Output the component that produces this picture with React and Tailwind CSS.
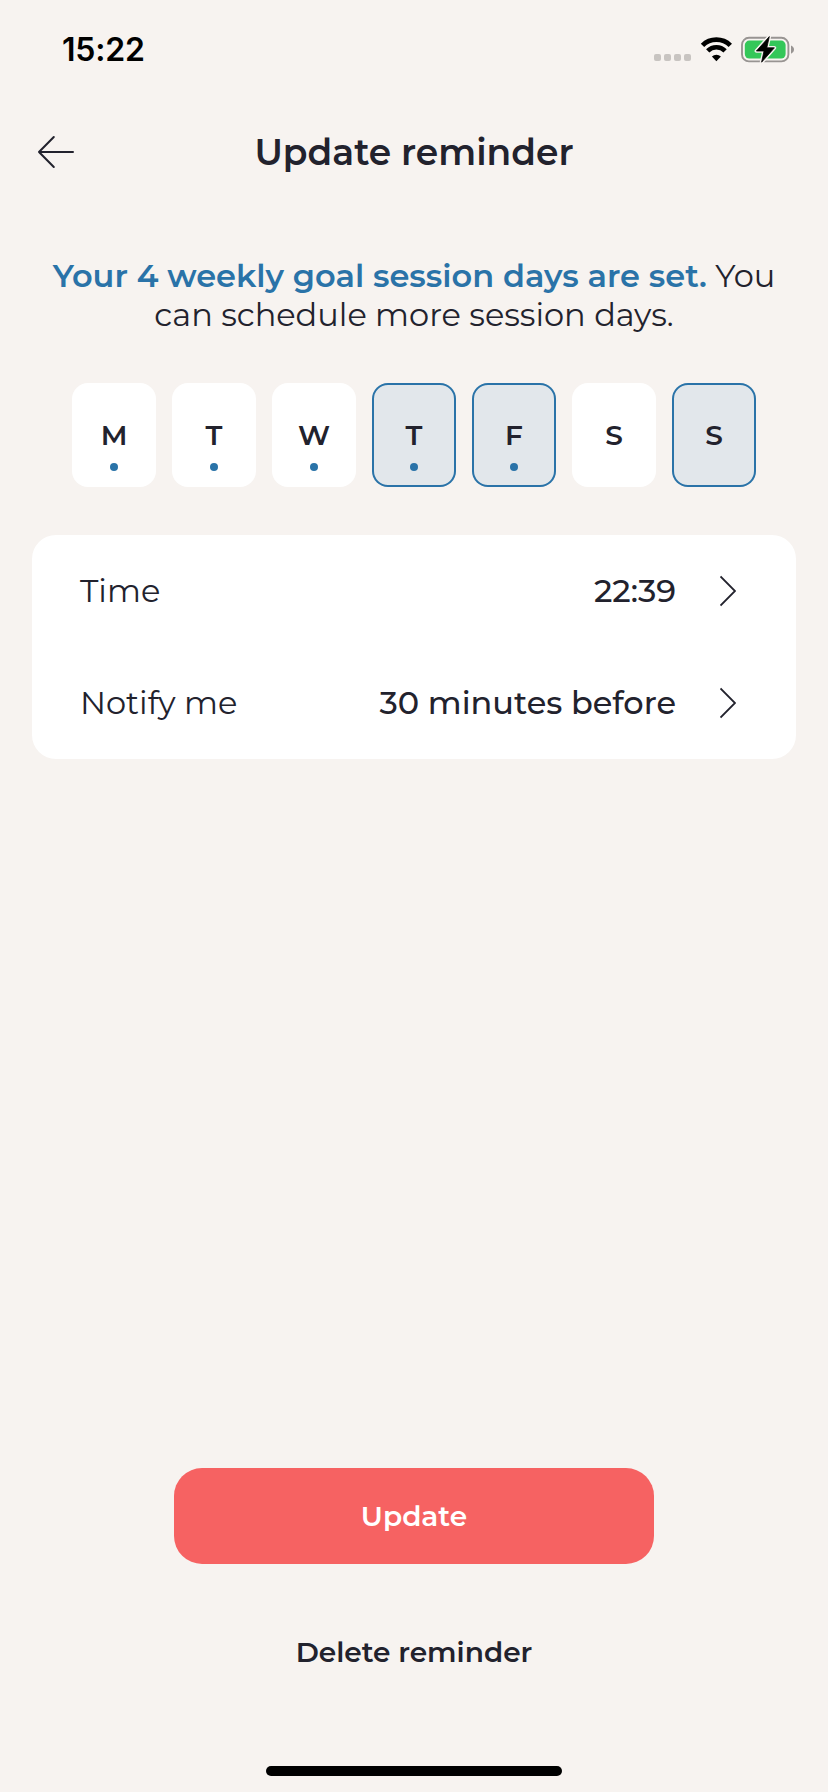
const days = [
  { label: 'M', dot: true, selected: false },
  { label: 'T', dot: true, selected: false },
  { label: 'W', dot: true, selected: false },
  { label: 'T', dot: true, selected: true },
  { label: 'F', dot: true, selected: true },
  { label: 'S', dot: false, selected: false },
  { label: 'S', dot: false, selected: true },
];

const settings = [
  { label: 'Time', value: '22:39' },
  { label: 'Notify me', value: '30 minutes before' },
];

function StatusBar() {
  return (
    <div className="flex h-[98px] items-center justify-between pl-[62px] pr-[33px]">
      <span className="mt-0.5 font-[Inter,sans-serif] text-[32px] font-semibold leading-none tracking-[-0.2px] text-black">15:22</span>
      <div className="flex items-center">
        <div className="mt-[17px] flex gap-[3px]">
          {[0, 1, 2, 3].map((i) => (
            <span key={i} className="h-[7px] w-[7px] rounded-[2px] bg-[#c8c4c1]" />
          ))}
        </div>
        <svg className="ml-[9px]" width="33" height="26" viewBox="0 0 33 26" fill="none">
          <path d="M2.5 9.4A19.8 19.8 0 0 1 30.3 9.4" stroke="#000" strokeWidth="4.8" />
          <path d="M7.7 14.9A12.3 12.3 0 0 1 25.1 14.9" stroke="#000" strokeWidth="4.6" />
          <path d="M16.4 25.2L11.9 20.6A6.4 6.4 0 0 1 20.9 20.6Z" fill="#000" />
        </svg>
        <svg className="ml-2" width="54" height="30" viewBox="0 0 54 30" fill="none">
          <rect x="1" y="3.8" width="46.4" height="23.6" rx="7" stroke="#989492" strokeWidth="1.9" />
          <rect x="3.8" y="6.6" width="40.8" height="18" rx="4.5" fill="#34c759" />
          <path d="M50 11.5C52 12.4 53 13.8 53 15.6C53 17.4 52 18.8 50 19.7Z" fill="#989492" />
          <path d="M28.3 2.6L15.4 17H23L20.6 28.2L33.4 13.8H25.8Z" fill="#000" stroke="#f7f3f0" strokeWidth="3.6" strokeLinejoin="round" />
          <path d="M28.3 2.6L15.4 17H23L20.6 28.2L33.4 13.8H25.8Z" fill="#000" stroke="#000" strokeWidth="0.8" strokeLinejoin="round" />
        </svg>
      </div>
    </div>
  );
}

function Chevron() {
  return (
    <svg width="16" height="32" viewBox="0 0 16 32" fill="none" stroke="#22222d" strokeWidth="1.8">
      <path d="M0.5 1.5L15 16L0.5 30.5" />
    </svg>
  );
}

export default function App() {
  return (
    <div className="flex h-[1792px] w-[828px] flex-col bg-[#f7f3f0] font-[Montserrat,Inter,sans-serif] text-[#22222d]">
      <StatusBar />

      <header className="grid h-[108px] grid-cols-[90px_1fr_90px] items-center">
        <button className="ml-[37px] w-[38px]" aria-label="Back">
          <svg width="38" height="34" viewBox="0 0 38 34" fill="none" stroke="#22222d" strokeWidth="2" strokeLinecap="round" strokeLinejoin="round">
            <path d="M36 17H2M16.8 2L2 17L16.8 32" />
          </svg>
        </button>
        <h1 className="text-center text-[36px] font-semibold leading-none">Update reminder</h1>
      </header>

      <p className="mt-[50px] whitespace-nowrap text-center text-[32px] leading-[39px]">
        <span className="font-semibold text-[#2a73a8]">Your 4 weekly goal session days are set.</span> You
        <br />
        can schedule more session days.
      </p>

      <div className="mt-[49px] flex justify-center gap-4">
        {days.map((day, i) => (
          <button
            key={i}
            className={
              day.selected
                ? 'relative flex h-[104px] w-[84px] items-center justify-center rounded-2xl bg-[#e2e7eb] ring-2 ring-inset ring-[#2a73a8]'
                : 'relative flex h-[104px] w-[84px] items-center justify-center rounded-2xl bg-white'
            }
          >
            <span className="text-[28px] font-semibold leading-none">{day.label}</span>
            {day.dot && <span className="absolute bottom-4 left-[38px] h-2 w-2 rounded-full bg-[#2a73a8]" />}
          </button>
        ))}
      </div>

      <div className="mx-8 mt-12 rounded-3xl bg-white">
        {settings.map((row) => (
          <div key={row.label} className="flex h-28 items-center pl-12 pr-[60px] text-[32px] leading-none">
            <span className="flex-1">{row.label}</span>
            <span className="mr-11 font-medium">{row.value}</span>
            <Chevron />
          </div>
        ))}
      </div>

      <div className="mt-auto flex flex-col items-center pb-4 text-[28px] font-semibold leading-none">
        <button className="h-24 w-[480px] rounded-[28px] bg-[#f66262] text-white">Update</button>
        <button className="mt-10 h-24 w-[480px]">Delete reminder</button>
        <div className="mt-[66px] h-2.5 w-[296px] rounded-full bg-black" />
      </div>
    </div>
  );
}
